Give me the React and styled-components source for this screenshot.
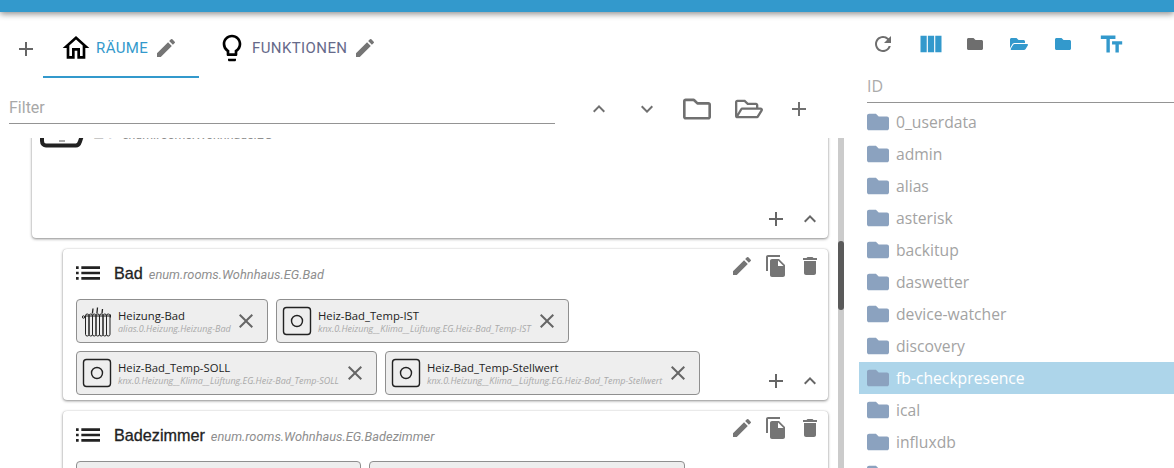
import React from "react"
import styled, { createGlobalStyle } from "styled-components"
import {
  MdAdd,
  MdEdit,
  MdClose,
  MdDelete,
  MdFileCopy,
  MdExpandLess,
  MdExpandMore,
  MdList,
  MdOutlineHome,
  MdOutlineLightbulb,
  MdRefresh,
  MdViewColumn,
  MdTextFields,
} from "react-icons/md"
import { FaFolder, FaFolderOpen, FaRegFolder, FaRegFolderOpen } from "react-icons/fa"

const GlobalStyle = createGlobalStyle`
  html, body {
    margin: 0;
    height: 100%;
    overflow: hidden;
    background: #fff;
    font-family: Roboto, "Liberation Sans", sans-serif;
  }
  * { box-sizing: border-box; }
`

const Page = styled.div`
  width: 1174px;
  height: 468px;
  display: flex;
  flex-direction: column;
  overflow: hidden;
`

const TopBar = styled.div`
  height: 12px;
  flex: none;
  background: #3399cc;
  box-shadow: 0 2px 6px rgba(0, 0, 0, 0.45);
  position: relative;
`

const Main = styled.div`
  flex: 1;
  min-height: 0;
  display: flex;
`

const Left = styled.div`
  width: 859px;
  flex: none;
  display: flex;
  flex-direction: column;
`

const Tabs = styled.div`
  height: 66px;
  flex: none;
  display: flex;
  padding: 8px 0 0 14px;
`

const AddTab = styled.div`
  width: 29px;
  height: 58px;
  display: flex;
  align-items: center;
  color: #666;
  font-size: 24px;
`

const Tab = styled.div`
  width: ${(p) => p.$width}px;
  height: 58px;
  display: flex;
  align-items: center;
  padding-left: ${(p) => p.$pad}px;
  border-bottom: 2px solid ${(p) => (p.$active ? "#3399cc" : "transparent")};
  color: ${(p) => (p.$active ? "#3399cc" : "#666a8a")};
  font-size: 15px;
  letter-spacing: 0.4px;
  svg.main {
    color: #000;
    font-size: 32px;
    margin-right: 4px;
  }
  svg.edit {
    color: #757575;
    font-size: 24px;
    margin-left: 6px;
  }
`

const FilterRow = styled.div`
  height: 48px;
  flex: none;
  display: flex;
  align-items: flex-start;
  padding: 16px 0 0 9px;
`

const FilterInput = styled.div`
  width: 546px;
  height: 30px;
  border-bottom: 1px solid #949494;
  color: #a8a8a8;
  font-size: 16px;
  line-height: 28px;
`

const FilterButtons = styled.div`
  display: flex;
  align-items: center;
  margin-left: 28px;
  height: 30px;
  color: #707070;
  svg {
    flex: none;
  }
`

const FilterBtn = styled.div`
  width: ${(p) => p.$w}px;
  display: flex;
  justify-content: center;
`

const Body = styled.div`
  flex: 1;
  min-height: 0;
  display: flex;
  margin-top: 12px;
  overflow: hidden;
`

const List = styled.div`
  width: 838px;
  flex: none;
  overflow: hidden;
  padding: 0 10px 0 32px;
`

const Scrollbar = styled.div`
  width: 6px;
  flex: none;
  background: #cbcbcb;
  position: relative;
`

const Thumb = styled.div`
  position: absolute;
  left: 0;
  right: 0;
  top: 103px;
  height: 69px;
  background: #5a5a5a;
  border-radius: 3px;
`

const Card = styled.div`
  position: relative;
  margin-left: ${(p) => (p.$nested ? 31 : 0)}px;
  margin-top: ${(p) => p.$top}px;
  height: ${(p) => p.$height}px;
  flex: none;
  background: #fff;
  border-radius: 4px;
  box-shadow: 0 1px 3px rgba(0, 0, 0, 0.45), 0 0 1px rgba(0, 0, 0, 0.2);
  padding: 16px 12px 0 13px;
`

const CardHead = styled.div`
  display: flex;
  align-items: center;
  height: 16px;
`

const ListIcon = styled(MdList)`
  color: #222;
  font-size: 32px;
  flex: none;
  margin: 0 10px 0 -4px;
`

const CardTitle = styled.span`
  font-family: "Liberation Sans", sans-serif;
  font-size: 16.2px;
  font-weight: 500;
  color: #222;
  -webkit-text-stroke: 0.3px #222;
`

const CardPath = styled.span`
  font-family: Roboto, sans-serif;
  font-size: 12.8px;
  font-style: italic;
  color: #8e8e8e;
  margin-left: 6px;
  position: relative;
  top: 1px;
`

const CardActions = styled.div`
  position: absolute;
  top: 5px;
  right: 6px;
  display: flex;
  gap: 10px;
  color: #757575;
  font-size: 24px;
`

const CornerActions = styled.div`
  position: absolute;
  right: 6px;
  bottom: 7px;
  display: flex;
  gap: 10px;
  color: #666;
  font-size: 24px;
`

const ClippedTitle = styled.div`
  position: absolute;
  left: 61px;
  top: -5px;
  display: flex;
  align-items: baseline;
`

const ClippedIcon = styled.svg`
  position: absolute;
  left: 8px;
  top: 0;
`

const Chips = styled.div`
  display: flex;
  flex-wrap: wrap;
  gap: 8px;
  margin-top: 18px;
`

const Chip = styled.div`
  width: ${(p) => p.$width}px;
  height: 44px;
  flex: none;
  display: flex;
  align-items: center;
  background: #eeeeee;
  border: 1px solid #8f8f8f;
  border-radius: 4px;
  padding-left: 5px;
  position: relative;
`

const ChipText = styled.div`
  margin-left: 6px;
  flex: 1;
  min-width: 0;
  font-family: "Open Sans", sans-serif;
  white-space: nowrap;
`

const ChipName = styled.div`
  font-size: 11.3px;
  line-height: 14px;
  color: #222;
`

const ChipPath = styled.div`
  font-size: 9px;
  line-height: 11px;
  font-style: italic;
  color: #a9a9a9;
`

const ChipClose = styled(MdClose)`
  color: #666;
  font-size: 24px;
  flex: none;
  margin-right: 9px;
`

const Right = styled.div`
  flex: 1;
  min-width: 0;
  display: flex;
  flex-direction: column;
`

const Toolbar = styled.div`
  height: 44px;
  flex: none;
  display: flex;
  align-items: center;
  padding: 20px 0 0 2px;
  color: #3399cc;
`

const ToolBtn = styled.div`
  width: ${(p) => p.$w}px;
  display: flex;
  justify-content: center;
  color: ${(p) => (p.$gray ? "#6e6e6e" : "#3399cc")};
`

const IdFilter = styled.div`
  height: 33px;
  margin: 14px 0 0 8px;
  border-bottom: 1px solid #949494;
  color: #ababab;
  font-family: "Open Sans", sans-serif;
  font-size: 16px;
  line-height: 32px;
  flex: none;
`

const Tree = styled.div`
  margin-top: 3px;
`

const TreeRow = styled.div`
  height: 32px;
  display: flex;
  align-items: center;
  padding-left: 8px;
  background: ${(p) => (p.$selected ? "#add5ea" : "transparent")};
  color: ${(p) => (p.$selected ? "#fff" : "#a3a3a3")};
  font-family: "Open Sans", sans-serif;
  font-size: 15.7px;
  svg {
    color: #8ba2bf;
    font-size: 22px;
    margin-right: 7px;
    flex: none;
  }
`

const StateIcon = () => (
  <svg width="30" height="30" viewBox="0 0 30 30" fill="none" stroke="#222" strokeWidth="1.4">
    <rect x="1.5" y="1.5" width="27" height="27" rx="3" />
    <circle cx="15" cy="15" r="5.5" />
  </svg>
)

const RadiatorIcon = () => (
  <svg width="30" height="32" viewBox="0 0 30 32" fill="none" stroke="#222" strokeWidth="1">
    <path d="M11 3.5l-.6 5M15.5 2.5l-.6 6M20.5 4l-.5 4.5" strokeWidth="1.3" />
    <circle cx="1.5" cy="12" r="1.2" />
    <path d="M3 11h25M28.5 9.5v3" />
    {[3.5, 7, 10.5, 14, 17.5, 21, 24.5].map((x) => (
      <rect key={x} x={x} y="9" width="3.5" height="22" rx="1.7" />
    ))}
  </svg>
)

const StateChip = ({ width, name, path, icon }) => (
  <Chip $width={width}>
    {icon || <StateIcon />}
    <ChipText>
      <ChipName>{name}</ChipName>
      <ChipPath>{path}</ChipPath>
    </ChipText>
    <ChipClose />
  </Chip>
)

const Actions = () => (
  <CardActions>
    <MdEdit />
    <MdFileCopy />
    <MdDelete />
  </CardActions>
)

const Corner = () => (
  <CornerActions>
    <MdAdd />
    <MdExpandLess />
  </CornerActions>
)

const folders = [
  "0_userdata",
  "admin",
  "alias",
  "asterisk",
  "backitup",
  "daswetter",
  "device-watcher",
  "discovery",
  "fb-checkpresence",
  "ical",
  "influxdb",
  "",
]

const App = () => (
  <Page>
    <GlobalStyle />
    <TopBar />
    <Main>
      <Left>
        <Tabs>
          <AddTab>
            <MdAdd />
          </AddTab>
          <Tab $active $width={156} $pad={17}>
            <MdOutlineHome className="main" />
            RÄUME
            <MdEdit className="edit" />
          </Tab>
          <Tab $width={190} $pad={17}>
            <MdOutlineLightbulb className="main" />
            FUNKTIONEN
            <MdEdit className="edit" />
          </Tab>
        </Tabs>
        <FilterRow>
          <FilterInput>Filter</FilterInput>
          <FilterButtons>
            <FilterBtn $w={32}>
              <MdExpandLess size={24} />
            </FilterBtn>
            <FilterBtn $w={64}>
              <MdExpandMore size={24} />
            </FilterBtn>
            <FilterBtn $w={36}>
              <FaRegFolder size={28} />
            </FilterBtn>
            <FilterBtn $w={68}>
              <FaRegFolderOpen size={28} />
            </FilterBtn>
            <FilterBtn $w={32}>
              <MdAdd size={24} />
            </FilterBtn>
          </FilterButtons>
        </FilterRow>
        <Body>
          <List>
            <Card $top={-10} $height={110}>
              <ClippedIcon width="44" height="20" viewBox="0 0 44 20" fill="none" stroke="#222" strokeWidth="4">
                <path d="M2 4v9c0 3 2 4.5 4 4.5h30c2 0 3-1 4-4l3-9" />
                <path d="M19 13h6" strokeWidth="1.4" stroke="#888" />
              </ClippedIcon>
              <ClippedTitle>
                <CardTitle>EG</CardTitle>
                <CardPath>enum.rooms.Wohnhaus.EG</CardPath>
              </ClippedTitle>
              <Corner />
            </Card>
            <Card $nested $top={11} $height={151}>
              <CardHead>
                <ListIcon />
                <CardTitle>Bad</CardTitle>
                <CardPath>enum.rooms.Wohnhaus.EG.Bad</CardPath>
              </CardHead>
              <Actions />
              <Chips>
                <StateChip
                  width={192}
                  name="Heizung-Bad"
                  path="alias.0.Heizung.Heizung-Bad"
                  icon={<RadiatorIcon />}
                />
                <StateChip
                  width={293}
                  name="Heiz-Bad_Temp-IST"
                  path="knx.0.Heizung__Klima__Lüftung.EG.Heiz-Bad_Temp-IST"
                />
                <StateChip
                  width={301}
                  name="Heiz-Bad_Temp-SOLL"
                  path="knx.0.Heizung__Klima__Lüftung.EG.Heiz-Bad_Temp-SOLL"
                />
                <StateChip
                  width={315}
                  name="Heiz-Bad_Temp-Stellwert"
                  path="knx.0.Heizung__Klima__Lüftung.EG.Heiz-Bad_Temp-Stellwert"
                />
              </Chips>
              <Corner />
            </Card>
            <Card $nested $top={11} $height={100}>
              <CardHead>
                <ListIcon />
                <CardTitle>Badezimmer</CardTitle>
                <CardPath>enum.rooms.Wohnhaus.EG.Badezimmer</CardPath>
              </CardHead>
              <Actions />
              <Chips>
                <Chip $width={285} />
                <Chip $width={316} />
              </Chips>
            </Card>
          </List>
          <Scrollbar>
            <Thumb />
          </Scrollbar>
        </Body>
      </Left>
      <Right>
        <Toolbar>
          <ToolBtn $gray $w={44}>
            <MdRefresh size={24} />
          </ToolBtn>
          <ToolBtn $w={52}>
            <MdViewColumn size={28} />
          </ToolBtn>
          <ToolBtn $gray $w={36}>
            <FaFolder size={16} />
          </ToolBtn>
          <ToolBtn $w={52}>
            <FaFolderOpen size={18} />
          </ToolBtn>
          <ToolBtn $w={36}>
            <FaFolder size={16} />
          </ToolBtn>
          <ToolBtn $w={60}>
            <MdTextFields size={27} />
          </ToolBtn>
        </Toolbar>
        <IdFilter>ID</IdFilter>
        <Tree>
          {folders.map((name, i) => (
            <TreeRow key={i} $selected={name === "fb-checkpresence"}>
              <FaFolder />
              {name}
            </TreeRow>
          ))}
        </Tree>
      </Right>
    </Main>
  </Page>
)

export default App
